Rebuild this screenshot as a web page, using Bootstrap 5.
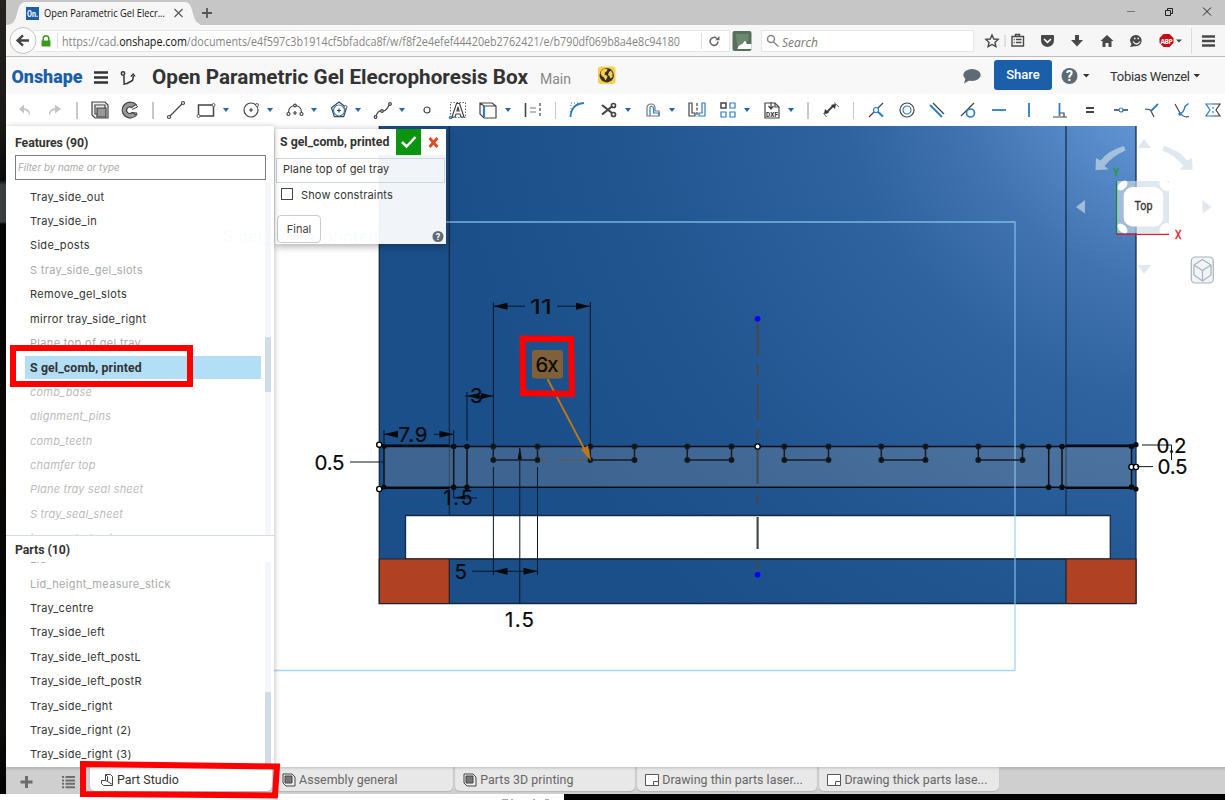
<!DOCTYPE html>
<html lang="en">
<head>
<meta charset="utf-8">
<title>Open Parametric Gel Elecrophoresis Box</title>
<link href="https://cdn.jsdelivr.net/npm/bootstrap@5.3.0/dist/css/bootstrap.min.css" rel="stylesheet">
<style>
body{width:1225px;height:800px;overflow:hidden;background:#fff;font-family:Roboto,"Liberation Sans",sans-serif;color:#333;font-size:13px;line-height:1.2}
svg{display:block;flex:none}
.seg{font-family:"Open Sans","Noto Sans",sans-serif}
.app{height:794px}
.desk{width:6px;flex:none;background:linear-gradient(#24211f 0,#1a1918 126px,#090b0d 180px,#3c3f41 185px,#3c3f41 222px,#050607 224px,#0b0806 480px,#050706 600px,#0d100c 720px,#000 794px)}
.titlebar{height:25px;background:#c6c6c6}
.winctl{margin-right:14.500px}
.addr{height:31px;background:#f6f6f6;padding-right:2.500px}
.urlbox{width:696px;height:22px;margin-left:-6px;background:#fff;border:1px solid #e6e6e6;border-left:0;padding-left:6px;flex:none}
.searchbox{width:213px;height:22px;background:#fff;border:1px solid #e6e6e6;font-size:12px;font-style:italic;color:#777;flex:none}
.head{height:38px;background:#f8f8f8;border-top:1px solid #bdbdbd;padding-right:3px}
.sharebtn{width:58px;height:30px;background:#1b5faa;font-size:13px;font-weight:500;border-radius:3px;padding:0;margin:-2px 8px 0 12px}
.tools{height:32px;padding-left:2.5px;background:#fff}
.tool{width:30.6px;flex:none;display:flex;justify-content:center}
.tool svg{width:20px;height:20px;fill:none;stroke:#444;stroke-width:1.2;overflow:visible}
.tool .b{stroke:#2b7fc4}
.drop{width:13.6px;flex:none}
.drop::before{content:"";display:block;width:0;margin-left:1px;border:3.3px solid transparent;border-top:4px solid #2264ac;border-bottom:0}
.rule{width:14.8px;flex:none}
.rule::before{content:"";display:block;width:1.5px;height:17px;margin:0 auto;background:#c8c8c8}
.side{width:268px;flex:none;background:#fff;box-shadow:1px 0 5px rgba(0,0,0,.22);z-index:2;font-family:Inter,Roboto,sans-serif;font-size:11px}
.ptitle{font-family:Roboto,sans-serif;font-weight:700;font-size:12.3px;padding-left:9px;letter-spacing:-.05px}
.filter{margin:0 8px 3px 9px;width:251px;height:25px;border:1px solid #7c7c7c;color:#aaa;font-style:italic;font-size:9.800px;padding-left:2px}
.rows{flex:1;overflow:hidden;z-index:0;position:relative}
.item{height:24.4px;padding-left:24px;display:flex;align-items:center;white-space:nowrap;letter-spacing:.32px}
.off{color:#aaa}.sup{color:#bbb;font-style:italic;letter-spacing:.2px}
.sel{position:relative;font-weight:700;font-family:Roboto,sans-serif;font-size:12.3px;letter-spacing:.13px}
.sel::before{content:"";position:absolute;z-index:-1;left:19px;right:4px;top:0;bottom:1px;background:#b2def6}
.track{width:6px;margin-right:3px;background:#f4f6f9}
.thumb{width:6px;background:#d0dde7}
.feat{height:353px;border-bottom:1px solid #d3dde5}
.feat .item:first-child{margin-top:2.100px}
.parts{height:205px}
.parts .item:first-child{margin-top:-14.300px}
.dlg{position:absolute;left:1px;top:3px;width:171px;height:115px;background:rgba(255,255,255,.94);box-shadow:0 2px 8px rgba(0,0,0,.35);z-index:1}
.dhead{height:26px;background:#fff;font-weight:700;font-size:12.3px}
.dname{padding-left:5px;width:121px;white-space:nowrap}
.ok{width:25px;height:26px;background:#0b9410}
.plane{height:25px;margin:3px 1px 0;border:1px solid #ccd6df;padding:0 0 1px 6px;font-size:11px;font-family:Inter,sans-serif;letter-spacing:.09px}
.showc{padding:1px 0 0 6px;font:11px Inter,sans-serif;height:22px;letter-spacing:.14px}
.cbx{width:12px;height:12px;border:1px solid #444;background:#fff;margin:-2px 8px 0 0}
.finalb{width:44px;height:28px;border:1px solid #ccc;border-radius:4px;background:#fff;font:11px Inter,sans-serif;color:#444;margin:9.500px 0 0 2px;padding:0}
.foot{height:27px;background:#cfcfcf;box-shadow:inset 0 3px 3px -1px #b4b4b4;z-index:3}
.dtab{width:179.500px;height:24px;margin-right:2.600px;background:#e8e8e8;border-radius:0 0 5px 5px;color:#666;font-size:12.400px;letter-spacing:.04px;padding:2.500px 0 0 8px;gap:3px;box-shadow:inset 0 3px 3px -2px #bbb,0 1px 1px #b5b5b5;white-space:nowrap;flex:none}
.dtab.on{background:#fff;color:#333;padding-left:10px;width:181.500px}
.dtab.asm{width:178.500px}
.under{height:6px}
.marks{position:absolute;left:0;top:0;z-index:9;pointer-events:none}
</style>
</head>
<body>
<div class="d-flex app">
 <div class="desk"></div>
 <div class="d-flex flex-column flex-grow-1">
  <div class="titlebar d-flex align-items-center">
   <svg width="194" height="25"><path d="M0 25C11 25 10 14 13 7Q15 2 20 2H178Q183 2 185 7C188 14 187 25 199 25Z" fill="#f6f6f6"/><rect x="20" y="7" width="13" height="13" fill="#1b5faa"/><text x="21" y="17.200" font-size="9.500" font-weight="700" fill="#fff" textLength="11" lengthAdjust="spacingAndGlyphs">On.</text><text x="38" y="17.300" class="seg" font-size="10.600" fill="#111" textLength="121" lengthAdjust="spacingAndGlyphs">Open Parametric Gel Elecr...</text><path d="M168.500 9l8 8m0-8l-8 8" stroke="#555" stroke-width="1.100"/></svg>
   <svg width="14" height="14" stroke="#555" stroke-width="1.800"><path d="M7 2v10M2 7h10"/></svg>
   <svg class="ms-auto winctl" width="90" height="16" fill="none" stroke="#222" stroke-width="1"><path d="M3 6.500h8" stroke="#777"/><path d="M41.500 5.500h5v5h-5zM43.500 5.500v-2h5v5h-2M79 2.500l8 8m0-8l-8 8"/></svg>
  </div>
  <div class="addr seg d-flex align-items-center">
   <svg width="34" height="31" class="position-relative"><circle cx="17" cy="15.500" r="13" fill="#fbfbfb" stroke="#c4c4c4"/><path d="M11.500 15.500H23M17 10.300l-5.400 5.200L17 20.700" fill="none" stroke="#444" stroke-width="2.400"/></svg>
   <div class="urlbox d-flex align-items-center">
    <svg width="22" height="16"><path d="M1.500 7.500h9V13.500h-9z" fill="#3b9a1c"/><path d="M3.200 8V5.500a2.800 2.800 0 0 1 5.600 0V8" fill="none" stroke="#3b9a1c" stroke-width="1.500"/><path d="M17.500 0v16" stroke="#ddd"/></svg>
    <svg width="622" height="20"><text x="0" y="14.500" font-size="12" fill="#858585" textLength="618" lengthAdjust="spacingAndGlyphs">https://cad.<tspan fill="#111">onshape.com</tspan>/documents/e4f597c3b1914cf5bfadca8f/w/f8f2e4efef44420eb2762421/e/b790df069b8a4e8c94180</text></svg>
    <svg class="ms-auto me-2" width="20" height="16" fill="none"><path d="M.5 0v16" stroke="#ddd"/><path d="M17 8.500a4 4 0 1 1-1.200-3" stroke="#666" stroke-width="1.500"/><path d="M18.500 3v4.200h-4.200z" fill="#666"/></svg>
   </div>
   <svg class="mx-0" width="23" height="20"><g transform="translate(2.500)"><rect width="19" height="20" rx="2" fill="#55705b"/><path d="M3 3h13v7L5 15z" fill="#88a083" opacity=".5"/><path d="M5 18q0-4 5-5l2-3q2 0 2 3h5v5z" fill="#fff"/></g></svg>
   <div class="searchbox d-flex align-items-center ms-2"><svg width="20" height="16" fill="none" stroke="#888" stroke-width="1.500"><circle cx="9" cy="6" r="3.500"/><path d="M11.500 9l5 4.500"/></svg><span class="pt-1 lh-1">Search</span></div>
   <svg width="242" height="26" class="ms-auto" fill="#484848">
    <path d="M8 7l1.800 4 4.300.4-3.200 3 1 4.300L8 16.500l-3.900 2.200 1-4.300-3.200-3 4.300-.4z" fill="none" stroke="#484848" stroke-width="1.400"/><path d="M21 7v12" stroke="#ccc"/>
    <path d="M28 8.500h11.500v9.500H28zM31.500 8v-1.500h4V8M32 11.500h5.500m-5.500 3h5.500M29.800 11.500h1m-1 3h1" fill="none" stroke="#484848" stroke-width="1.400"/>
    <path d="M57 8q0-1 1-1h11q1 0 1 1v4q0 6-6.500 7Q57 18 57 12z"/><path d="M60 11l3.500 3.300L67 11" fill="none" stroke="#fff" stroke-width="1.600"/>
    <path d="M91 7h4v5h4l-6 6.500-6-6.500h4z"/><path d="M116.500 13l6.500-6 6.500 6h-2v6h-3v-4h-3v4h-3v-6z"/>
    <path d="M152.500 7a6 5.500 0 1 1-2 11.200L146 19l1.500-3A6 5.500 0 0 1 152.500 7z"/><path d="M149 13.500q3.500 5 7 0M150 10.500h1.500m2 0h1.500" fill="none" stroke="#fff" stroke-width="1.300"/>
    <path d="M179.500 6h6l4 4v5l-4 4h-6l-4-4v-5z" fill="#c70d14"/><text x="176.500" y="15.500" font-size="6.500" font-weight="700" fill="#fff" textLength="12">ABP</text><path d="M192 11.500h6l-3 3z"/>
    <path d="M207.500 0v26" stroke="#ddd"/><path d="M218 8.500h13m-13 4.500h13m-13 4.500h13" stroke="#484848" stroke-width="2.500"/>
   </svg>
  </div>
  <div class="head d-flex align-items-center">
   <svg width="146" height="36"><text x="5.500" y="25" font-size="19" font-weight="900" fill="#1b5faa" textLength="71" lengthAdjust="spacingAndGlyphs">Onshape</text><path d="M88 14.500h14m-14 5h14m-14 5h14" stroke="#333" stroke-width="2.400"/><g fill="none" stroke="#333" stroke-width="1.500"><circle cx="117" cy="15.500" r="1.700"/><path d="M118 17.500v6q0 3 3 2l5.500-3q.8-2 .8-5M118 25.500v1.500"/><path d="M124.800 18.500l2.500-2.500 1.800 2.500" stroke-width="1.200"/></g></svg>
   <svg width="470" height="36"><text x="0" y="26" font-size="20" font-weight="700" fill="#333" textLength="376" lengthAdjust="spacingAndGlyphs">Open Parametric Gel Elecrophoresis Box</text><text x="388" y="26" font-size="14" fill="#888" textLength="31">Main</text><rect x="446" y="8.500" width="17.500" height="17.500" rx="3" fill="#fbcf4e"/><circle cx="454.700" cy="17.200" r="7.200" fill="#333"/><path d="M449.500 12.500l3-2 3 .5-.5 2-2 1.500-.5 2 3 1.500-.5 2-1.500 2.500-1.500-3-2-1.500-1.500-2.500zM457 14l2-1.500 1.500 2.500v4l-2 1.500-1-2.500-1.500-1z" fill="#fbcf4e"/></svg>
   <svg class="ms-auto" width="20" height="20"><ellipse cx="10" cy="9" rx="8.700" ry="6" fill="#5e6b74"/><path d="M4 11l-2 6.500 7-4z" fill="#5e6b74"/></svg>
   <button class="btn btn-primary border-0 sharebtn">Share</button>
   <svg width="44" height="20"><circle cx="9.500" cy="10" r="8" fill="#5e6b74"/><text x="9.500" y="15" font-size="14" font-weight="700" fill="#fff" text-anchor="middle">?</text><path d="M23 8h6.500l-3.200 3.500z" fill="#333"/></svg>
   <svg width="121" height="20"><text x="6" y="15" font-size="13" fill="#333" textLength="80">Tobias Wenzel</text><path d="M89.500 8H96l-3.200 3.500z" fill="#333"/></svg>
  </div>
  <div class="tools d-flex align-items-center overflow-hidden">
   <div class="tool"><svg><path d="M16 17q1-7-6-8v-3.500L5 10l5 4.500V11q4 0 6 6z" transform="translate(0-1)" fill="#c4c4c4" stroke="none"/></svg></div>
   <div class="tool"><svg><path d="M4 17q-1-7 6-8v-3.500L16 10l-6 4.500V11q-4 0-6 6z" transform="translate(1-1)" fill="#c4c4c4" stroke="none"/></svg></div>
   <div class="rule"></div>
   <div class="tool"><svg><path d="M2 2h13l3 3v13H5l-3-3z" fill="#eee"/><path d="M5 5h10v9H5z"/><path d="M7 8h9v9H7z" fill="#999"/></svg></div>
   <div class="tool"><svg><path d="M16 4.500A8 8 0 1 0 16.500 15L12 12.500a3.200 3.200 0 1 1-.5-5z" fill="#999"/><path d="M16 4.500l1.500 2.500-5.500 2.500M12 12.500l5 .5-.5 2" stroke-width="1"/></svg></div>
   <div class="rule"></div>
   <div class="tool"><svg><path d="M4 16L16 4"/><circle cx="3" cy="17" r="1.500"/><circle cx="17" cy="3" r="1.500"/></svg></div>
   <div class="tool"><svg><path d="M2.500 5h15v11h-15z" stroke-width="1.500"/><circle cx="17.500" cy="5" r="1.500" fill="#fff" stroke-width=".8"/><circle cx="2.500" cy="16" r="1.500" fill="#fff" stroke-width=".8"/></svg></div><div class="drop"></div>
   <div class="tool"><svg><circle cx="10" cy="10" r="7"/><path d="M10 8v4M8 10h4"/><circle cx="16" cy="5" r="1.500" fill="#fff" stroke-width=".8"/></svg></div><div class="drop"></div>
   <div class="tool"><svg><path d="M3.500 12.500q0-6.500 6.500-7 6.500.5 6.500 7"/><circle cx="3.500" cy="14" r="1.500"/><circle cx="16.500" cy="14" r="1.500"/><circle cx="10" cy="5.500" r="1.300" fill="#fff"/><path d="M10 11v4M8 13h4"/></svg></div><div class="drop"></div>
   <div class="tool"><svg><path d="M10 2l7.500 5.700-2.800 9H5.300l-2.800-9z"/><circle class="b" cx="10" cy="10.500" r="5.500"/><path d="M10 8.500v4M8 10.500h4"/><circle cx="16.500" cy="7" r="1.500" fill="#fff" stroke-width=".8"/></svg></div><div class="drop"></div>
   <div class="tool"><svg><path d="M3 16q2-6 6-5t7-6"/><circle cx="2.500" cy="17" r="1.300"/><circle cx="9" cy="11" r="1.300" fill="#fff"/><circle cx="17" cy="4" r="1.300"/></svg></div><div class="drop"></div>
   <div class="tool"><svg><circle cx="10" cy="10" r="3"/></svg></div>
   <div class="tool"><svg><path d="M2.500 2.500h15v15h-15z" stroke-dasharray="1.500 1.500" stroke-width=".8"/><path d="M4 17L8.500 3.500h3L16 17h-3l-1-3H8l-1 3zM9 11h2l-1-4z"/><circle class="b" cx="2.500" cy="17.500" r="1.200"/></svg></div>
   <div class="tool"><svg><path d="M2 3h12l4 3v12H6l-4-4zM2 3l4 3h12"/><path class="b" d="M6 6v11" stroke-width="2.200"/></svg></div><div class="drop"></div>
   <div class="tool"><svg><path d="M2.500 3v14" stroke-width="1.600"/><path d="M7 8h6M7 12h6" stroke="#777"/><path d="M17 3v14" stroke-dasharray="3 2"/></svg></div>
   <div class="rule"></div>
   <div class="tool"><svg><path class="b" d="M2.500 17Q3 4 16 3" stroke-width="1.800"/><path d="M3 12V3h9" stroke-dasharray="1 2" stroke-width=".8"/></svg></div>
   <div class="tool"><svg><path d="M3 5l10 8M3 14.500l10-8" stroke-width="2.200"/><circle cx="14.500" cy="5.500" r="2" stroke-width="1.700"/><circle cx="14.500" cy="14.500" r="2" stroke-width="1.700"/></svg></div><div class="drop"></div>
   <div class="tool"><svg><path d="M4 16V8q0-4 4-4t4 4v3h4v5z" stroke="#777"/><path class="b" d="M7 16V8q0-2 2-1.500 2 0 1.500 6.500H16v3"/></svg></div><div class="drop"></div>
   <div class="tool"><svg><path d="M2 3v13h6v-3H5V3z"/><path d="M10 3v14" stroke-dasharray="3 1.500"/><path class="b" d="M18 3v13h-6v-3h3V3z"/></svg></div>
   <div class="tool"><svg><path d="M3 3h5v5H3z" stroke-width="1.500"/><path class="b" d="M12 3h5v5h-5zM3 12h5v5H3zM12 12h5v5h-5z"/></svg></div><div class="drop"></div>
   <div class="tool"><svg><path d="M3 18V3h10l4 4v11z"/><path d="M9 2v6M6.500 6L9 9l2.500-3M13 3v4h4"/><text x="4" y="16.500" font-size="6.500" font-weight="700" fill="#333" stroke="none" textLength="12">DXF</text></svg></div><div class="drop"></div>
   <div class="rule"></div>
   <div class="tool"><svg><path d="M5 13l8-8" stroke-width="2"/><path d="M3 14l1-5 4 4zM15 4l-5 1 4 4z" fill="#333" stroke="none"/><path d="M2.500 13l3 4M13 2.500l5 4.500" stroke-width=".9"/></svg></div>
   <div class="rule"></div>
   <div class="tool"><svg><path d="M3 17l7-7 7-7"/><path class="b" d="M10 10l7 6.500" stroke-width="2.200"/><circle class="b" cx="10" cy="10" r="2.500" fill="#fff"/></svg></div>
   <div class="tool"><svg><circle cx="10" cy="10" r="7"/><circle class="b" cx="10" cy="10" r="4"/></svg></div>
   <div class="tool"><svg><path d="M6 3l11 11"/><path class="b" d="M3 5l12 12" stroke-width="2"/></svg></div>
   <div class="tool"><svg><path d="M3 16L16 3"/><circle class="b" cx="12.500" cy="13" r="4" stroke-width="1.700"/></svg></div>
   <div class="tool"><svg><path class="b" d="M3 10h14" stroke-width="1.800"/></svg></div>
   <div class="tool"><svg><path class="b" d="M10 3v14" stroke-width="1.800"/></svg></div>
   <div class="tool"><svg><path d="M3 17h14M10 13h4v4"/><path class="b" d="M9.500 3v13" stroke-width="1.800"/></svg></div>
   <div class="tool"><svg><path d="M6 8h8M6 12h8" stroke-width="1.800"/></svg></div>
   <div class="tool"><svg><path d="M3 10h14" stroke-width="1.600"/><circle class="b" cx="10" cy="10" r="2" fill="#fff"/></svg></div>
   <div class="tool"><svg><path d="M3 9q5 0 6 2t3 6"/><path class="b" d="M9 11l7-7" stroke-width="1.800"/></svg></div>
   <div class="tool"><svg><path d="M3 4l5 9q4 5 9 3.500"/><path class="b" d="M8 13.500q4-1 5-7l3.500-3" stroke-width="1.500"/><circle cx="8" cy="14" r="1.700" fill="#2b7fc4" stroke="none"/></svg></div>
   <div class="tool"><svg><path class="b" d="M9 4H3l4 6-4 6h6"/><path class="b" d="M10 3v14" stroke-dasharray="2 2"/><path d="M11 4h6l-4 6 4 6h-6"/></svg></div>
  </div>
  <div class="d-flex flex-grow-1">
   <aside class="side d-flex flex-column">
    <div class="ptitle d-flex align-items-center" style="height:29px;padding-top:5px">Features (90)</div>
    <div class="filter d-flex align-items-center">Filter by name or type</div>
    <div class="feat d-flex">
     <div class="rows">
      <div class="item">Tray_side_out</div><div class="item">Tray_side_in</div><div class="item">Side_posts</div><div class="item off">S tray_side_gel_slots</div><div class="item">Remove_gel_slots</div><div class="item">mirror tray_side_right</div><div class="item off">Plane top of gel tray</div><div class="item sel">S gel_comb, printed</div><div class="item sup">comb_base</div><div class="item sup">alignment_pins</div><div class="item sup">comb_teeth</div><div class="item sup">chamfer top</div><div class="item sup">Plane tray seal sheet</div><div class="item sup">S tray_seal_sheet</div><div class="item sup">tray_seal_sheet</div>
     </div>
     <div class="track"><div class="thumb" style="height:55px;margin-top:154px"></div></div>
    </div>
    <div class="ptitle d-flex align-items-center" style="height:26px;padding-top:2px">Parts (10)</div>
    <div class="parts d-flex">
     <div class="rows"><div class="item off">Lid</div><div class="item off">Lid_height_measure_stick</div><div class="item">Tray_centre</div><div class="item">Tray_side_left</div><div class="item">Tray_side_left_postL</div><div class="item">Tray_side_left_postR</div><div class="item">Tray_side_right</div><div class="item">Tray_side_right (2)</div><div class="item">Tray_side_right (3)</div></div>
     <div class="track"><div class="thumb" style="height:75px;margin-top:130px"></div></div>
    </div>
   </aside>
   <main class="position-relative" style="z-index:1">
    <svg width="951" height="641" viewBox="274 126 951 641" font-family="Inter,sans-serif">
     <defs><radialGradient id="sheen" gradientUnits="userSpaceOnUse" cx="1200" cy="40" r="760"><stop offset="0" stop-color="#70a3e0"/><stop offset=".16" stop-color="#5d90ce"/><stop offset=".33" stop-color="#4073b0"/><stop offset=".48" stop-color="#2f63a0"/><stop offset=".78" stop-color="#205590"/><stop offset="1" stop-color="#1a4f8a"/></radialGradient></defs>
     <path d="M379.300 120V603.500H1136V120zM405.500 515.500H1110.300V559H405.500z" fill="url(#sheen)" fill-rule="evenodd" stroke="#142a42" stroke-width="1.300"/>
     <path d="M379.300 559h70v44.500h-70zM1066 559h70v44.500h-70z" fill="#b04223" stroke="#222" stroke-width="1.200"/>
     <path d="M449.300 126V515.500M1066 126V515.500M449 559H1066" stroke="#13283f" stroke-width="1.200"/>
     <path d="M384 446.500H1131.500V487.300H384z" fill="#aaa8a6" fill-opacity=".25" stroke="#0a0f14" stroke-width="1.500"/>
     <path d="M379 445.500H449M379 488H449M1066 445.500H1136M1066 488H1136" stroke="#05080b" stroke-width="2"/>
     <path d="M446 222H1015V670.500H274" fill="none" stroke="#8fcdf0" stroke-opacity=".8" stroke-width="1.300"/>
     <path d="M453.700 446.500v41M467 446.500v41M1048.700 446.500v41M1062 446.500v41" stroke="#111" stroke-width="1.500"/>
     <g id="teeth" fill="none" stroke="#161c22" stroke-width="1.500"></g>
     <g fill="#0a0d10"><circle cx="384" cy="446.500" r="2.500"/><circle cx="384" cy="487" r="2.500"/><circle cx="453.700" cy="446.500" r="2.800"/><circle cx="453.700" cy="487.300" r="2.800"/><circle cx="467" cy="446.500" r="2.800"/><circle cx="467" cy="487.300" r="2.800"/><circle cx="1048.700" cy="446.500" r="2.800"/><circle cx="1048.700" cy="487.300" r="2.800"/><circle cx="1062" cy="446.500" r="2.800"/><circle cx="1062" cy="487.300" r="2.800"/><circle cx="1131.500" cy="446.500" r="2.800"/><circle cx="1136" cy="444.700" r="2.600"/><circle cx="1131.500" cy="487" r="2.800"/><circle cx="1136" cy="489" r="2.600"/></g>
     <g stroke="#44494e" stroke-width="2.200"><path d="M757.600 319V355M757.600 364v11M757.600 384v36M757.600 429v10M757.600 449v35M757.600 494v10M757.600 517v32M757.600 561v8"/><path d="M540 459.700h9M558 459.700h30" stroke="#5b5b5b" stroke-width="1.500"/></g>
     <circle cx="757.600" cy="318.700" r="2.800" fill="#00f"/><circle cx="757.600" cy="574.700" r="2.800" fill="#00f"/>
     <g fill="#fff" stroke="#000" stroke-width="1.400"><circle cx="379.300" cy="444.700" r="2.600"/><circle cx="379.300" cy="489" r="2.600"/><circle cx="757.600" cy="446.500" r="2.600"/><circle cx="1131.500" cy="467" r="2.600"/><circle cx="1136" cy="467" r="2.600"/></g>
     <g stroke="#0b1620" stroke-width="1" fill="none"><path d="M493.400 302V446M590.300 302V446M493 306.200H525M557 306.200H590M467 392V441M465 396H493M384 430V446M453.700 430V446M384 434.300H395M434 434.300H453M350 462H384M472 571.300H537M493.400 467V575M537.500 467V575M519.800 448V603M453.700 490V498H477M1142 445H1171.500V460M1137 466.600H1153"/></g>
     <path d="M493.500 306.200l14-3.500v7zM590 306.200l-14-3.500v7zM467 396l14-3.500v7zM493 396l-14-3.500v7zM384 434.300l14-3.500v7zM453.500 434.300l-14-3.500v7zM493.500 571.300l14-3.500v7zM537.500 571.300l-14-3.500v7zM454 497.500l11-2v4zM519.800 447l2 12h-4z" fill="#06090c"/>
     <rect x="532" y="350" width="31" height="28.500" rx="3" fill="#7f6038"/>
     <path d="M547.500 379L588 456" stroke="#bd7618" stroke-width="1.900"/><path d="M591 461l-10-11.500 7-4z" fill="#bd7618"/>
     <g font-size="20.500" fill="#08090a" stroke="#08090a" stroke-width=".2"><text x="530" y="314" textLength="22" lengthAdjust="spacingAndGlyphs">11</text><text x="470" y="403">3</text><text x="398.500" y="441.500" textLength="29">7.9</text><text x="314.500" y="469.700" textLength="30">0.5</text><text x="443.500" y="505" textLength="29" font-size="19.500">1.5</text><text x="454.500" y="578.500">5</text><text x="505" y="626.700" textLength="29">1.5</text><text x="535.500" y="371.500" textLength="23">6x</text><text x="1156.500" y="452.500" textLength="30">0.2</text><text x="1157.500" y="474" textLength="30">0.5</text></g>
     <g fill="#cfdce7" fill-opacity=".65"><path d="M1144 139l7 9h-13.500zM1144 274l7-9h-13.500zM1076 207l9-7v13.500zM1211.500 207l-9-7v13.500z"/><path d="M1124 146q-15 4-23.500 14.500l-4.500-2.500-.5 12 13-.5-4-3.500q8-10 21-15.500zM1164 146q15 4 23 14.500l5-2.500.5 12-13-.5 4-3.500q-8-10-21-15.500z"/><path d="M1117 181h52v52h-52z"/></g>
     <g fill="#fff"><ellipse cx="1122.500" cy="185.500" rx="6" ry="3.700" transform="rotate(-45 1122.500 185.500)"/><ellipse cx="1122.500" cy="228.500" rx="6" ry="3.700" transform="rotate(45 1122.500 228.500)"/><ellipse cx="1165" cy="185.500" rx="6.500" ry="4.500" transform="rotate(45 1165 185.500)"/><ellipse cx="1165" cy="228.500" rx="6.500" ry="4.500" transform="rotate(-45 1165 228.500)"/><rect x="1123.700" y="187" width="39.500" height="39.500" rx="9"/></g>
     <path d="M1116.500 181v53" stroke="#178a2b" stroke-width="1.200"/><path d="M1116 234.300h53" stroke="#d8202c" stroke-width="1.200"/>
     <g font-family="Roboto"><text x="1113" y="176" font-size="11" fill="#17a02b" textLength="6" lengthAdjust="spacingAndGlyphs" stroke="#17a02b" stroke-width=".4">Y</text><text x="1175" y="238.500" font-size="12" fill="#e0202c" textLength="6.500" lengthAdjust="spacingAndGlyphs" stroke="#e0202c" stroke-width=".4">X</text><text x="1134.500" y="210" font-size="12" fill="#333" textLength="18" lengthAdjust="spacingAndGlyphs" stroke="#333" stroke-width=".3">Top</text></g>
     <g fill="#f2f5f7" stroke="#a9b2bb" stroke-width="1.200"><rect x="1191.300" y="257" width="22" height="26" rx="4"/><path d="M1202.500 259.500l8.500 5.500v10l-8.500 6-8.500-6v-10zM1194 265l8.500 5.500 8.500-5.500M1202.500 270.500V281"/></g>
    </svg>
    <div class="dlg">
     <div class="dhead d-flex align-items-center"><span class="dname">S gel_comb, printed</span><span class="ok"><svg width="25" height="26"><path d="M6 13l4.500 4.500L19.500 8" fill="none" stroke="#fff" stroke-width="2.500"/></svg></span><svg width="25" height="26"><path d="M8.500 9l8 9m0-9l-8 9" stroke="#de4b22" stroke-width="2.800"/></svg></div>
     <div class="plane d-flex align-items-center">Plane top of gel tray</div>
     <div class="showc d-flex align-items-center"><span class="cbx"></span>Show constraints</div>
     <button class="finalb">Final</button>
     <svg width="14" height="14" class="position-absolute bottom-0 end-0"><circle cx="6" cy="6.500" r="5.500" fill="#5e6b74"/><text x="6" y="10" font-size="9" font-weight="700" fill="#fff" text-anchor="middle">?</text></svg>
    </div>
   </main>
  </div>
  <footer class="foot d-flex position-relative">
   <svg width="84" height="27" stroke="#6d6d6d"><path d="M20.500 9v12M14.500 15h12" stroke-width="3"/><path d="M56 10h2m1.500 0H69M56 13.400h2m1.500 0H69M56 16.800h2m1.500 0H69M56 20.200h2m1.500 0H69" stroke-width="2"/></svg>
   <div class="dtab on d-flex align-items-center"><svg width="14" height="14" fill="none" stroke="#444"><path d="M1.500 7.500h4V1.500h5l2 2v9h-9l-2-2zM5.500 7.500l2 1V3.500l-2-2M7.500 8.500l5 3"/></svg>Part Studio</div>
   <div class="dtab asm d-flex align-items-center"><svg width="14" height="14" stroke="#444"><path d="M1 1h9l3 3v9H4l-3-3z" fill="#eee"/><path d="M3 3h7v7H3z" fill="#777"/></svg>Assembly general</div>
   <div class="dtab d-flex align-items-center"><svg width="14" height="14" stroke="#444"><path d="M1 1h9l3 3v9H4l-3-3z" fill="#eee"/><path d="M3 3h7v7H3z" fill="#777"/></svg>Parts 3D printing</div>
   <div class="dtab d-flex align-items-center"><svg width="14" height="14" fill="#fff" stroke="#555"><path d="M.5 1.500h13v11H.5z"/><path d="M8.500 8.500h5v4h-5z"/></svg>Drawing thin parts laser...</div>
   <div class="dtab d-flex align-items-center"><svg width="14" height="14" fill="#fff" stroke="#555"><path d="M.5 1.500h13v11H.5z"/><path d="M8.500 8.500h5v4h-5z"/></svg>Drawing thick parts lase...</div>
  </footer>
 </div>
</div>
<div class="under d-flex overflow-hidden"><div style="width:564px"></div><div class="flex-grow-1 bg-black"></div></div>
<svg class="marks" width="1225" height="800" fill="none" stroke="#f00" stroke-width="6">
 <path d="M13 348H190V384H13zM83 764L277 766.500 275 795.500 83 794zM522.500 338.500L571 339 572 394 523 393z"/>
 <path d="M502 799.500h6m3 0h2m20 0h2m10 0h4" stroke="#aaa" stroke-width="1"/>
 <text x="223" y="242" font-size="16" font-weight="500" stroke="none" fill="#3aa0dc" fill-opacity=".045" textLength="155" lengthAdjust="spacingAndGlyphs">S gel_comb, printed</text>
</svg>
<script src="https://cdn.jsdelivr.net/npm/bootstrap@5.3.0/dist/js/bootstrap.bundle.min.js"></script>
<script>
// comb teeth: six equal slots patterned along the tray edge
document.getElementById('teeth').innerHTML=[0,1,2,3,4,5].map(i=>{const x=493.3+i*97;return `<path d="M${x} 446.500V460H${x+44.200}V446.500"/>`+[[x,446.5],[x,460],[x+44.2,446.5],[x+44.2,460]].map(p=>`<circle cx="${p[0]}" cy="${p[1]}" r="2.200" fill="#111"/>`).join('')}).join('');
</script>
</body>
</html>
